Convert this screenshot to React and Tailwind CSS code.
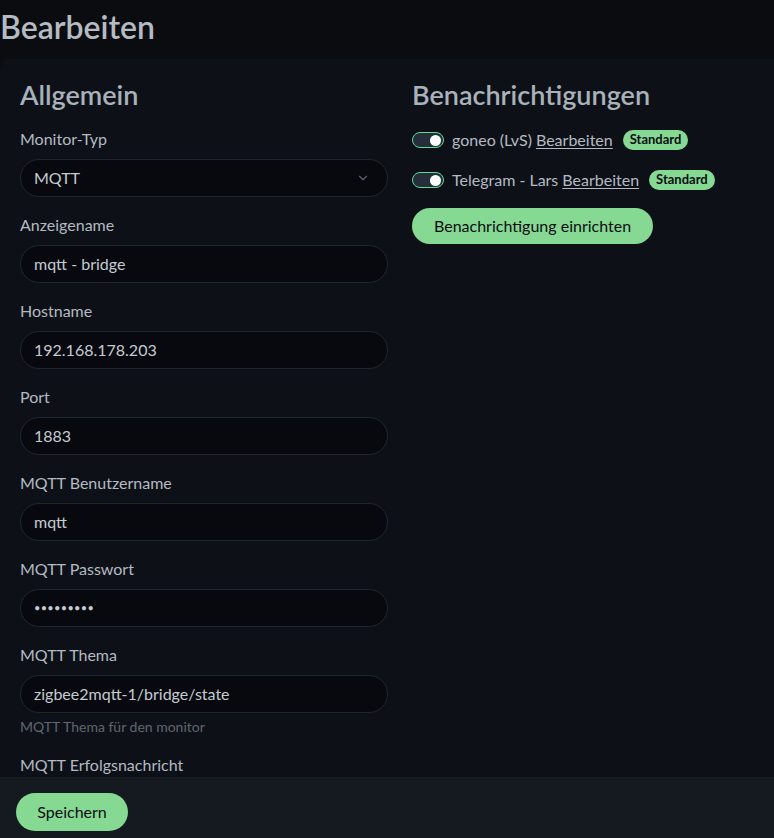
import { ChevronDown } from 'lucide-react';

const fields = [
  { label: 'Anzeigename', value: 'mqtt - bridge' },
  { label: 'Hostname', value: '192.168.178.203' },
  { label: 'Port', value: '1883' },
  { label: 'MQTT Benutzername', value: 'mqtt' },
  { label: 'MQTT Passwort', value: '•••••••••', password: true },
];

function Field({ label, value, password, hint }) {
  return (
    <div className="mb-4">
      <label className="block text-[16px] leading-6 text-[#b3bac2] mb-2">{label}</label>
      <div className="h-[38px] rounded-full bg-[#07090e] border border-[#1e2633] flex items-center px-[13px] text-[16px] text-[#c5cbd2]">
        <span className={password ? 'tracking-[0.3px] text-[11px]' : ''}>{value}</span>
      </div>
      {hint && <div className="mt-1 text-[14px] leading-5 text-[#5f6670]">{hint}</div>}
    </div>
  );
}

function Toggle() {
  return (
    <span className="w-8 h-4 rounded-full bg-[#262d3b] border border-[#5cdd8b] flex items-center justify-end pr-[2px] shrink-0">
      <span className="w-[11px] h-[11px] rounded-full bg-white"></span>
    </span>
  );
}

function Notification({ name }) {
  return (
    <div className="flex items-center h-6 mb-4 text-[16px] text-[#b3bac2]">
      <Toggle />
      <span className="ml-2">{name}</span>
      <span className="ml-1 underline underline-offset-2">Bearbeiten</span>
      <span className="ml-[10px] px-[7px] h-5 rounded-full bg-[#86d993] text-[#0b0d12] text-[13px] font-bold flex items-center">Standard</span>
    </div>
  );
}

export default function App() {
  return (
    <div className="min-h-[838px] h-[838px] bg-[#0b0c10] overflow-hidden relative" style={{ fontFamily: 'Lato, "Noto Sans", sans-serif' }}>
      <div className="h-[59px] flex items-center">
        <h1 className="text-[32px] font-semibold text-[#b4bbc3] leading-none -mt-[6px]">Bearbeiten</h1>
      </div>

      <div className="bg-[#0d1117] rounded-tl-[10px] pl-5 pt-[21px] w-[800px]">
        <div className="flex gap-6">
          <div className="w-[368px] shrink-0">
            <h2 className="text-[27px] font-semibold text-[#a9b1bb] leading-[29px] mb-[18px]">Allgemein</h2>

            <div className="mb-4">
              <label className="block text-[16px] leading-6 text-[#b3bac2] mb-2">Monitor-Typ</label>
              <div className="h-[38px] rounded-full bg-[#07090e] border border-[#1e2633] flex items-center justify-between px-[13px] text-[16px] text-[#c5cbd2]">
                <span>MQTT</span>
                <ChevronDown size={14} className="text-[#5a6270] mr-[4px]" strokeWidth={2} />
              </div>
            </div>

            {fields.map((f) => (
              <Field key={f.label} {...f} />
            ))}

            <Field label="MQTT Thema" value="zigbee2mqtt-1/bridge/state" hint="MQTT Thema für den monitor" />

            <label className="block text-[16px] leading-6 text-[#b3bac2] mb-2">MQTT Erfolgsnachricht</label>
            <div className="h-[38px] rounded-full bg-[#07090e] border border-[#1e2633]"></div>
          </div>

          <div className="flex-1">
            <h2 className="text-[27px] font-semibold text-[#a9b1bb] leading-[29px] mb-[19px]">Benachrichtigungen</h2>
            <Notification name="goneo (LvS)" />
            <Notification name="Telegram - Lars" />
            <button className="h-9 px-[22px] rounded-full bg-[#86d993] text-[#0b0d12] text-[16px]">
              Benachrichtigung einrichten
            </button>
          </div>
        </div>
      </div>

      <div className="absolute left-0 right-0 bottom-0 h-[61px] bg-[#161b22]/[0.97] px-4 pt-4">
        <button className="h-[38px] w-[112px] rounded-full bg-[#86d993] text-[#0b0d12] text-[16px]">Speichern</button>
      </div>
    </div>
  );
}
